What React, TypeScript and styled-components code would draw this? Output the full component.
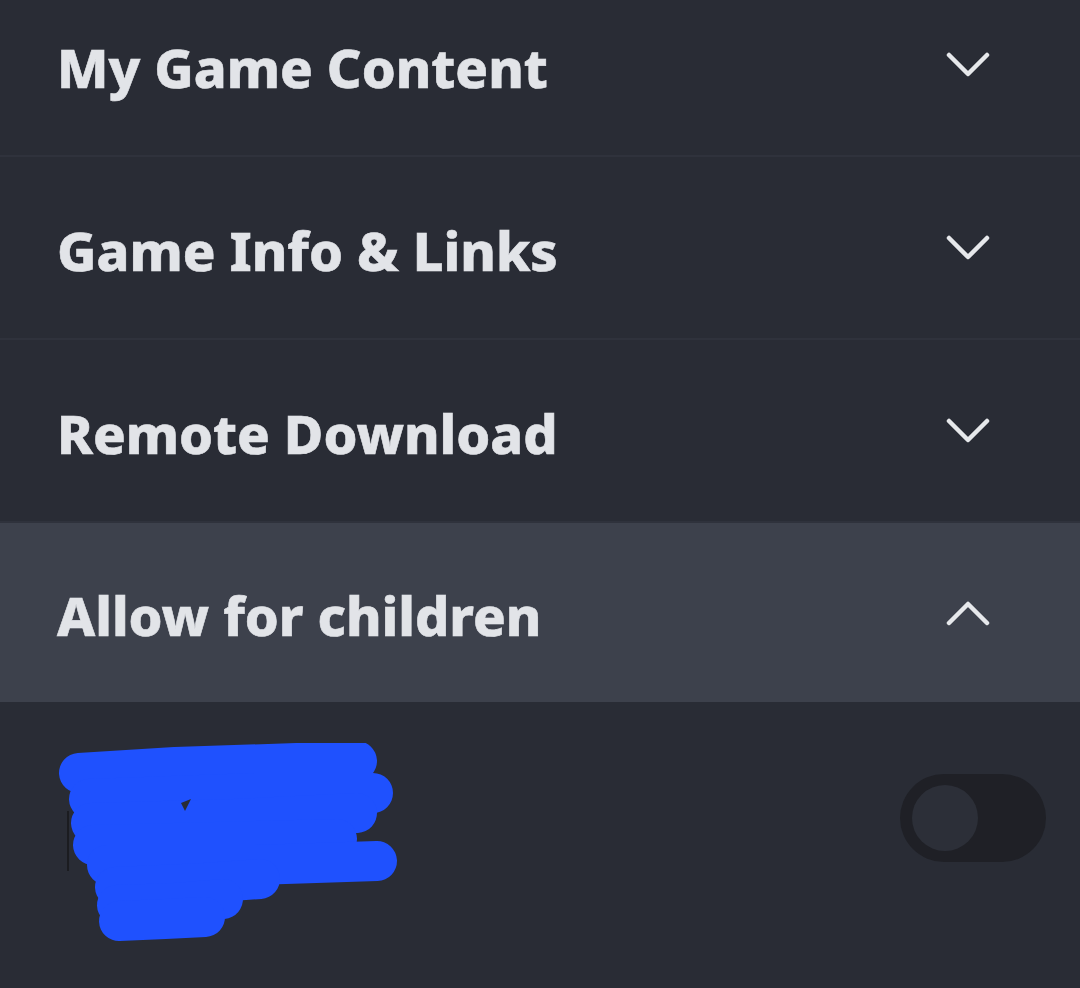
import React, { useState } from "react";
import styled, { createGlobalStyle } from "styled-components";

const GlobalStyle = createGlobalStyle`
  html, body {
    margin: 0;
    padding: 0;
    background: #292c35;
    overflow: hidden;
  }
  * { box-sizing: border-box; }
`;

const Page = styled.div`
  width: 1080px;
  height: 988px;
  overflow: hidden;
  background: #292c35;
  font-family: "Noto Sans", "Open Sans", sans-serif;
`;

/* list is scrolled a bit, first row is cut off at the top */
const List = styled.div`
  margin-top: -26px;
  display: flex;
  flex-direction: column;
`;

const Row = styled.div<{ $open?: boolean }>`
  height: ${(p) => (p.$open ? 179 : 183)}px;
  display: flex;
  align-items: center;
  justify-content: space-between;
  padding: 0 90px 0 57px;
  background: ${(p) => (p.$open ? "#3d414c" : "#292c35")};
  border-bottom: ${(p) => (p.$open ? "none" : "2px solid #2f323c")};
`;

const Title = styled.h2`
  margin: 4px 0 0;
  color: #e2e4e8;
  font-size: 54px;
  font-weight: 800;
  letter-spacing: 0;
  -webkit-text-stroke: 0.6px #e2e4e8;
`;

const Chevron = styled.svg`
  width: 44px;
  height: 26px;
  flex: none;
`;

const Body = styled.div`
  height: 286px;
  display: flex;
  align-items: center;
  justify-content: space-between;
  padding: 0 34px 54px 55px;
`;

const Scribble = styled.svg`
  width: 345px;
  height: 205px;
  margin-top: 54px;
`;

const Toggle = styled.button<{ $on: boolean }>`
  width: 146px;
  height: 88px;
  border-radius: 44px;
  border: none;
  padding: 11px 12px;
  background: #1f2026;
  display: flex;
  justify-content: ${(p) => (p.$on ? "flex-end" : "flex-start")};
  cursor: pointer;
`;

const Knob = styled.span`
  width: 66px;
  height: 66px;
  border-radius: 50%;
  background: #2c2f38;
`;

const ChevronIcon = ({ up }: { up?: boolean }) => (
  <Chevron viewBox="0 0 44 26">
    <polyline
      points={up ? "3,23 22,4 41,23" : "3,3 22,22 41,3"}
      fill="none"
      stroke="#e6e8eb"
      strokeWidth={4.5}
      strokeLinecap="round"
      strokeLinejoin="round"
    />
  </Chevron>
);

const sections = ["My Game Content", "Game Info & Links", "Remote Download"];

export default function App() {
  const [on, setOn] = useState(false);

  return (
    <Page>
      <GlobalStyle />
      <List>
        {sections.map((s) => (
          <Row key={s}>
            <Title>{s}</Title>
            <ChevronIcon />
          </Row>
        ))}
        <Row $open>
          <Title>Allow for children</Title>
          <ChevronIcon up />
        </Row>
        <Body>
          <Scribble viewBox="0 0 345 205">
            <g
              fill="none"
              stroke="#1f51fe"
              strokeWidth={40}
              strokeLinecap="round"
              strokeLinejoin="round"
            >
              <polyline points="24,30 120,24 302,18" />
              <polyline points="34,56 200,50 318,50" />
              <polyline points="36,80 180,76 302,70" />
              <polyline points="38,102 200,98 282,96" />
              <polyline points="52,122 200,122 322,118" />
              <polyline points="60,144 150,140 205,136" />
              <polyline points="62,162 120,160 168,156" />
              <polyline points="64,178 110,176 150,174" />
            </g>
            <polygon points="126,60 136,56 130,68" fill="#292c35" />
            <line x1="13" y1="68" x2="13" y2="128" stroke="#1b1c20" strokeWidth={2} />
          </Scribble>
          <Toggle $on={on} onClick={() => setOn(!on)}>
            <Knob />
          </Toggle>
        </Body>
      </List>
    </Page>
  );
}
